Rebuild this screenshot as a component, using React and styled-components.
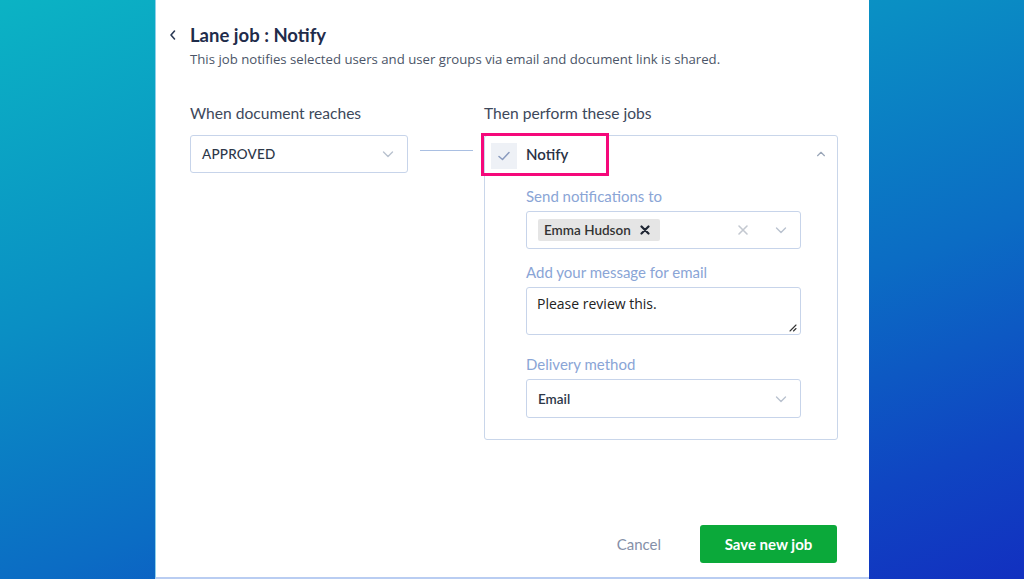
import React from "react";
import styled, { createGlobalStyle } from "styled-components";

const GlobalStyle = createGlobalStyle`
  html, body {
    margin: 0;
    padding: 0;
  }
  body {
    font-family: Lato, "Open Sans", "Liberation Sans", sans-serif;
  }
  * {
    box-sizing: border-box;
  }
`;

function Chevron({ up, color = "#b9c2cf", size = 14 }) {
  return (
    <svg width={size} height={size} viewBox="0 0 14 14" fill="none">
      <path
        d={up ? "M3 9 L7 5 L11 9" : "M2.5 5 L7 9.5 L11.5 5"}
        stroke={color}
        strokeWidth="1.4"
        strokeLinecap="round"
        strokeLinejoin="round"
      />
    </svg>
  );
}

export default function App() {
  return (
    <Page>
      <GlobalStyle />
      <Panel>
        <Header>
          <Back>
            <svg width="10" height="12" viewBox="0 0 10 12" fill="none">
              <path d="M6.5 2 L3 6 L6.5 10" stroke="#2b3a55" strokeWidth="1.6" strokeLinecap="round" strokeLinejoin="round" />
            </svg>
          </Back>
          <div>
            <Title>Lane job : Notify</Title>
            <Subtitle>This job notifies selected users and user groups via email and document link is shared.</Subtitle>
          </div>
        </Header>

        <Columns>
          <ColLabel>When document reaches</ColLabel>
          <span />
          <ColLabel>Then perform these jobs</ColLabel>

          <Select>
            <SelectValue $caps>APPROVED</SelectValue>
            <Chevron />
          </Select>
          <Connector />
          <JobCard>
            <JobHeader>
              <Highlight />
              <CheckBox>
                <svg width="14" height="12" viewBox="0 0 14 12" fill="none">
                  <path d="M2 6.5 L5.5 9.5 L12 2.5" stroke="#8a9bbf" strokeWidth="1.5" strokeLinecap="round" strokeLinejoin="round" />
                </svg>
              </CheckBox>
              <JobName>Notify</JobName>
              <Spacer />
              <Chevron up color="#9aa6b8" size={12} />
            </JobHeader>
            <JobBody>
              <Field>
                <FieldLabel>Send notifications to</FieldLabel>
                <Select $wide>
                  <Chip>
                    Emma Hudson
                    <svg width="10" height="10" viewBox="0 0 10 10">
                      <path d="M1.5 1.5 L8.5 8.5 M8.5 1.5 L1.5 8.5" stroke="#1f2633" strokeWidth="2.2" strokeLinecap="round" />
                    </svg>
                  </Chip>
                  <Spacer />
                  <Clear>
                    <svg width="12" height="12" viewBox="0 0 12 12">
                      <path d="M2 2 L10 10 M10 2 L2 10" stroke="#c3c8d0" strokeWidth="1.6" strokeLinecap="round" />
                    </svg>
                  </Clear>
                  <Chevron />
                </Select>
              </Field>
              <Field>
                <FieldLabel>Add your message for email</FieldLabel>
                <Message>
                  Please review this.
                  <Grip>
                    <svg width="9" height="9" viewBox="0 0 9 9">
                      <path d="M8 2 L2 8 M8 5.5 L5.5 8" stroke="#333" strokeWidth="1.1" strokeLinecap="round" />
                    </svg>
                  </Grip>
                </Message>
              </Field>
              <Field $last>
                <FieldLabel>Delivery method</FieldLabel>
                <Select $wide $tall>
                  <SelectValue $bold>Email</SelectValue>
                  <Chevron />
                </Select>
              </Field>
            </JobBody>
          </JobCard>
        </Columns>

        <Footer>
          <Cancel>Cancel</Cancel>
          <Save>Save new job</Save>
        </Footer>
      </Panel>
    </Page>
  );
}

const Page = styled.div`
  height: 579px;
  width: 100%;
  display: flex;
  justify-content: center;
  background: linear-gradient(160deg, #0bb3c4 0%, #0a8fc4 35%, #0b6cc4 62%, #0f45c2 85%, #1230c0 100%);
  overflow: hidden;
`;

const Panel = styled.div`
  width: 714px;
  height: 100%;
  background: #fff;
  display: flex;
  flex-direction: column;
  padding: 24px 32px 14px 8px;
  border-left: 1px solid #8fd0ea;
  border-bottom: 2px solid #b9cdf2;
`;

const Header = styled.div`
  display: flex;
  align-items: flex-start;
`;

const Back = styled.div`
  width: 26px;
  height: 22px;
  display: flex;
  align-items: center;
  padding-left: 4px;
`;

const Title = styled.h1`
  margin: 0;
  font-size: 18.5px;
  line-height: 22px;
  font-weight: 700;
  color: #1f2c4b;
`;

const Subtitle = styled.p`
  margin: 4px 0 0;
  font-family: "Open Sans", Lato, sans-serif;
  font-size: 13.2px;
  line-height: 18px;
  color: #4b5568;
`;

const Columns = styled.div`
  display: grid;
  grid-template-columns: 218px 76px 354px;
  grid-template-rows: auto auto;
  row-gap: 12px;
  margin-top: 35px;
  margin-left: 26px;
  align-items: start;
`;

const ColLabel = styled.div`
  font-size: 15.6px;
  line-height: 20px;
  color: #3d485b;
`;

const Select = styled.div`
  height: ${(p) => (p.$tall ? "39px" : "38px")};
  width: ${(p) => (p.$wide ? "275px" : "100%")};
  border: 1px solid #c7d4ea;
  border-radius: 3px;
  display: flex;
  align-items: center;
  padding: 0 12px 0 11px;
  background: #fff;
`;

const SelectValue = styled.span`
  flex: 1;
  font-size: 13.5px;
  color: #2d3748;
  font-weight: ${(p) => (p.$bold ? 600 : 500)};
  letter-spacing: ${(p) => (p.$caps ? "0.2px" : "0")};
`;

const Connector = styled.div`
  height: 1px;
  background: #a9bfe2;
  margin: 15px 11px 0 12px;
`;

const JobCard = styled.div`
  border: 1px solid #c9d6ea;
  border-radius: 3px;
  display: flex;
  flex-direction: column;
`;

const JobHeader = styled.div`
  position: relative;
  display: flex;
  align-items: center;
  height: 36px;
  padding: 0 10px 0 6px;
`;

const Highlight = styled.div`
  position: absolute;
  left: -4px;
  top: -3px;
  width: 128px;
  height: 43px;
  border: 3px solid #f5087a;
  pointer-events: none;
`;

const CheckBox = styled.div`
  width: 26px;
  height: 26px;
  background: #eef1f6;
  display: flex;
  align-items: center;
  justify-content: center;
  margin-top: 4px;
`;

const JobName = styled.span`
  margin-left: 9px;
  font-size: 15px;
  font-weight: 600;
  color: #2a3245;
`;

const Spacer = styled.div`
  flex: 1;
`;

const JobBody = styled.div`
  padding: 14px 0 21px 41px;
  display: flex;
  flex-direction: column;
`;

const Field = styled.div`
  display: flex;
  flex-direction: column;
  gap: 5px;
  margin-bottom: ${(p) => (p.$last ? "0" : "13px")};
`;

const FieldLabel = styled.div`
  font-size: 15px;
  line-height: 20px;
  color: #8aa5d6;
`;

const Chip = styled.div`
  height: 22px;
  display: flex;
  align-items: center;
  gap: 9px;
  padding: 0 10px 0 6px;
  background: #e5e5e5;
  border-radius: 2px;
  font-size: 13.5px;
  font-weight: 600;
  color: #333;
`;

const Clear = styled.div`
  display: flex;
  align-items: center;
  margin-right: 25px;
`;

const Message = styled.div`
  position: relative;
  width: 275px;
  height: 48px;
  border: 1px solid #c7d4ea;
  border-radius: 3px;
  padding: 6px 10px;
  font-family: "Open Sans", Lato, sans-serif;
  font-size: 14px;
  color: #222;
  margin-bottom: 6px;
`;

const Grip = styled.div`
  position: absolute;
  right: 3px;
  bottom: 2px;
  display: flex;
`;

const Footer = styled.div`
  margin-top: auto;
  display: flex;
  justify-content: flex-end;
  align-items: center;
`;

const Cancel = styled.button`
  background: none;
  border: none;
  font-family: Lato, sans-serif;
  font-size: 15px;
  color: #8590a8;
  margin-right: 33px;
  padding: 0 6px;
  cursor: pointer;
`;

const Save = styled.button`
  height: 38px;
  width: 137px;
  border: none;
  border-radius: 3px;
  background: #0ba93a;
  color: #fff;
  font-family: Lato, sans-serif;
  font-size: 15px;
  font-weight: 700;
  cursor: pointer;
`;
